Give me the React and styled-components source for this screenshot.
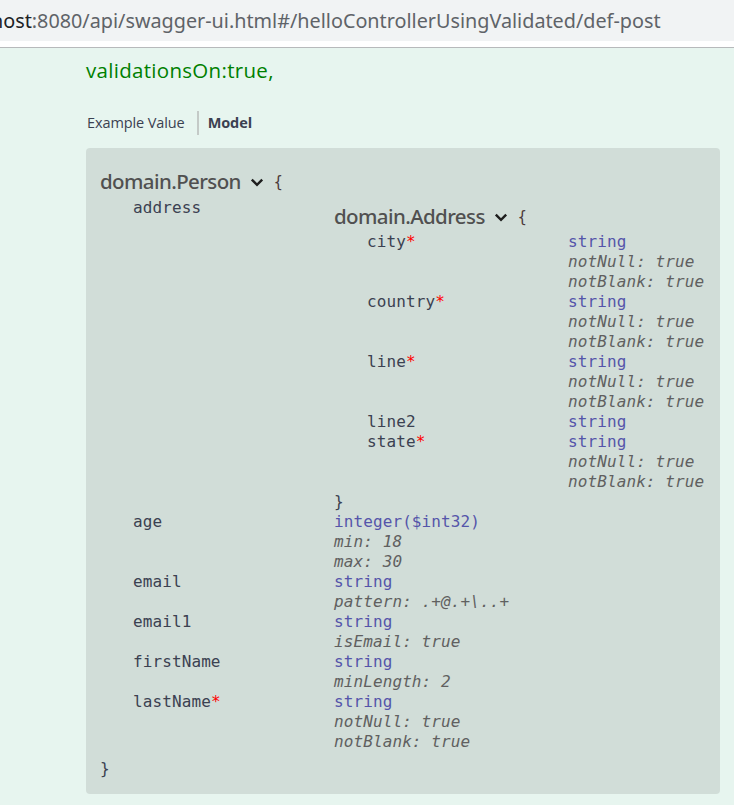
import React from "react";
import styled, { createGlobalStyle } from "styled-components";

const Global = createGlobalStyle`
  html, body { margin: 0; padding: 0; background: #e7f5ef; }
  body { width: 734px; height: 805px; overflow: hidden; }
`;

const Page = styled.div`
  display: flex;
  flex-direction: column;
  min-height: 805px;
  background: #e7f5ef;
`;

const UrlBar = styled.div`
  height: 41px;
  background: #f1f3f4;
  display: flex;
  align-items: center;
  overflow: hidden;
  white-space: nowrap;
  font-family: "Noto Sans", "Open Sans", sans-serif;
  font-size: 19.8px;
  color: #5f6368;
  border-bottom: 6px solid #ffffff;
  box-shadow: 0 1px 0 #b7b9bb;
`;

const Host = styled.span`
  color: #202124;
  margin-left: -9px;
`;

const Body = styled.div`
  padding: 10px 0 0 86px;
  display: flex;
  flex-direction: column;
`;

const Description = styled.div`
  font-family: "Open Sans", "Noto Sans", sans-serif;
  font-size: 20.5px;
  color: #008000;
  line-height: 26px;
  letter-spacing: 0.3px;
`;

const Tabs = styled.div`
  display: flex;
  align-items: center;
  margin-top: 28px;
  font-family: "Open Sans", sans-serif;
  font-size: 14.5px;
  color: #3b4151;
`;

const Tab = styled.span`
  padding: 0 ${(p) => (p.$first ? "12px" : "0")} 0 ${(p) => (p.$first ? "1px" : "9px")};
  font-weight: ${(p) => (p.$active ? 700 : 400)};
  line-height: 24px;
  border-right: ${(p) => (p.$first ? "2px solid #c4cac7" : "none")};
  letter-spacing: -0.1px;
`;

const ModelBox = styled.div`
  margin-top: 13px;
  width: 634px;
  box-sizing: border-box;
  background: #d1ddd8;
  border-radius: 4px;
  padding: 19px 14px 15px;
  font-family: "DejaVu Sans Mono", "Liberation Mono", monospace;
  font-size: 16px;
  letter-spacing: 0.1px;
  line-height: 20px;
  color: #3b4151;
`;

const TitleLine = styled.div`
  display: flex;
  align-items: center;
  height: ${(p) => (p.$nested ? "34px" : "31px")};
  padding-top: ${(p) => (p.$nested ? "1px" : "0")};
  padding-bottom: ${(p) => (p.$nested ? "0" : "4px")};
  box-sizing: border-box;
`;

const Title = styled.span`
  font-family: "Noto Sans", "Open Sans", sans-serif;
  font-size: 20.5px;
  letter-spacing: -0.6px;
  color: #505050;
  font-weight: 500;
`;

const Chevron = styled.svg`
  width: 16px;
  height: 16px;
  margin: 2px 9px 0 8px;
`;

const Brace = styled.span`
  color: #4b3a3a;
  font-family: "DejaVu Sans Mono", monospace;
  font-size: 15px;
  margin-top: 3px;
`;

const Props = styled.div`
  display: flex;
  flex-direction: column;
  padding-left: 33px;
`;

const Row = styled.div`
  display: grid;
  grid-template-columns: 201px 1fr;
`;

const Name = styled.div`
  white-space: nowrap;
`;

const Star = styled.span`
  color: #ff0000;
`;

const TypeCell = styled.div`
  display: flex;
  flex-direction: column;
`;

const Type = styled.span`
  color: #5555aa;
`;

const Format = styled.span`
  color: #606060;
  font-style: italic;
`;

const CloseBrace = styled.div`
  color: #3b4151;
  margin-top: ${(p) => p.$gap || 0}px;
`;

const ChevronIcon = () => (
  <Chevron viewBox="0 0 20 20">
    <path d="M3.5 7 L10 13.5 L16.5 7" fill="none" stroke="#1e1e1e" strokeWidth="3" />
  </Chevron>
);

function Prop({ name, required, type, formats = [], children }) {
  return (
    <Row>
      <Name>
        {name}
        {required && <Star>*</Star>}
      </Name>
      <TypeCell>
        {children || (
          <>
            <Type>{type}</Type>
            {formats.map((f) => (
              <Format key={f}>{f}</Format>
            ))}
          </>
        )}
      </TypeCell>
    </Row>
  );
}

const nn = ["notNull: true", "notBlank: true"];

export default function App() {
  return (
    <Page>
      <Global />
      <UrlBar>
        <Host>host</Host>:8080/api/swagger-ui.html#/helloControllerUsingValidated/def-post
      </UrlBar>
      <Body>
        <Description>validationsOn:true,</Description>
        <Tabs>
          <Tab $first>Example Value</Tab>
          <Tab $active>Model</Tab>
        </Tabs>
        <ModelBox>
          <TitleLine>
            <Title>domain.Person</Title>
            <ChevronIcon />
            <Brace>{"{"}</Brace>
          </TitleLine>
          <Props>
            <Prop name="address">
              <TitleLine $nested>
                <Title>domain.Address</Title>
                <ChevronIcon />
                <Brace>{"{"}</Brace>
              </TitleLine>
              <Props>
                <Prop name="city" required type="string" formats={nn} />
                <Prop name="country" required type="string" formats={nn} />
                <Prop name="line" required type="string" formats={nn} />
                <Prop name="line2" type="string" />
                <Prop name="state" required type="string" formats={nn} />
              </Props>
              <CloseBrace>{"}"}</CloseBrace>
            </Prop>
            <Prop name="age" type="integer($int32)" formats={["min: 18", "max: 30"]} />
            <Prop name="email" type="string" formats={["pattern: .+@.+\\..+"]} />
            <Prop name="email1" type="string" formats={["isEmail: true"]} />
            <Prop name="firstName" type="string" formats={["minLength: 2"]} />
            <Prop name="lastName" required type="string" formats={nn} />
          </Props>
          <CloseBrace $gap={7}>{"}"}</CloseBrace>
        </ModelBox>
      </Body>
    </Page>
  );
}
